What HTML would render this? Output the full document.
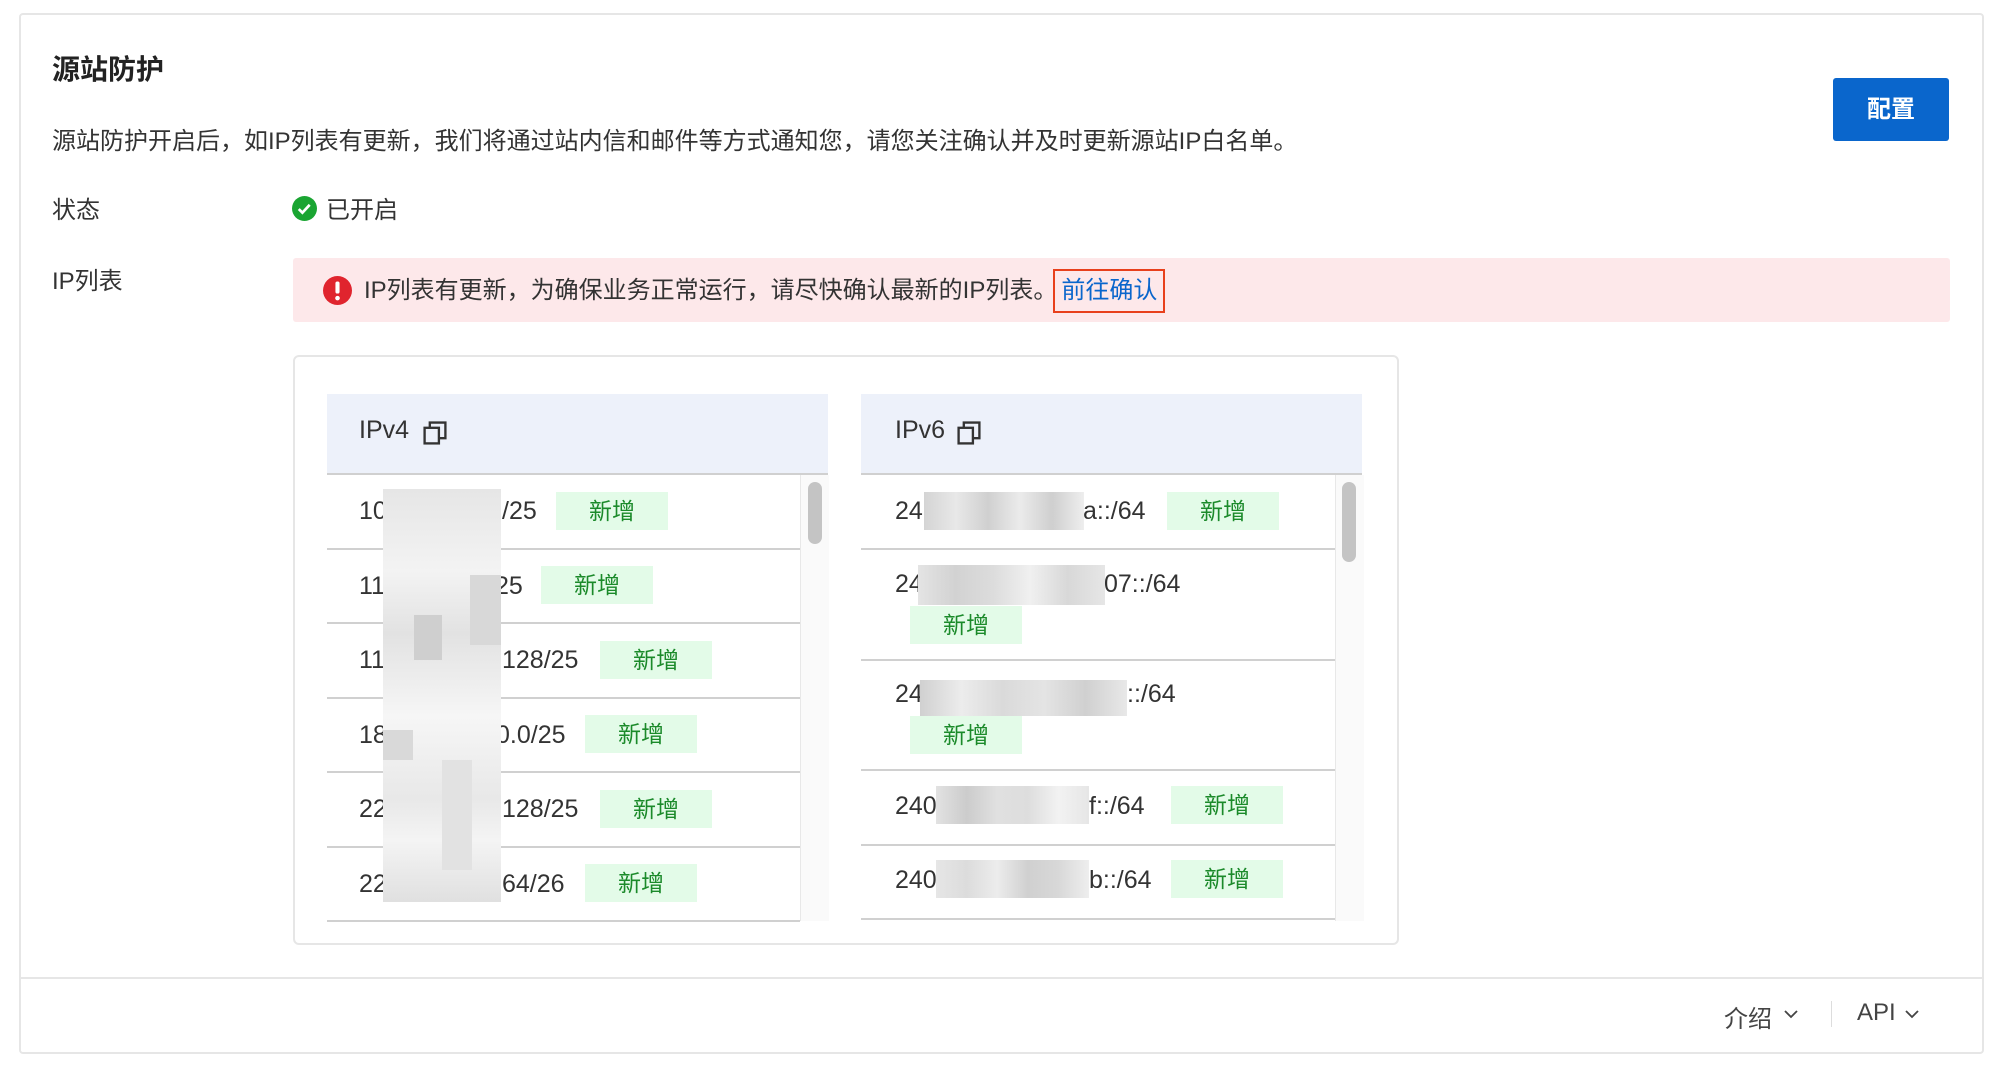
<!DOCTYPE html><html><head><meta charset="utf-8"><style>
body{margin:0;width:1994px;height:1074px;background:#fff;font-family:"Liberation Sans","Noto Sans CJK SC",sans-serif;color:#333;position:relative;overflow:hidden}
.a{position:absolute;white-space:nowrap}
.tag{position:absolute;background:#e3fbe8;color:#1b8a2a;font-size:23px;width:112px;height:38px;line-height:38px;text-align:center}
.ip{position:absolute;font-size:25px;color:#333;line-height:30px}
.ln{position:absolute;height:2px;background:#d0d0d0}
.b{position:absolute}
</style></head><body>
<div class="a" style="left:19px;top:13px;width:1961px;height:1037px;border:2px solid #e6e6e6;border-radius:4px"></div>
<div class="a" style="left:52px;top:48px;font-size:28px;font-weight:bold;color:#222">源站防护</div>
<div class="a" style="left:1833px;top:78px;width:116px;height:63px;background:#0a66cc;border-radius:3px;color:#fff;font-size:24px;font-weight:bold;line-height:63px;text-align:center">配置</div>
<div class="a" style="left:52px;top:121px;font-size:24px;color:#333">源站防护开启后，如IP列表有更新，我们将通过站内信和邮件等方式通知您，请您关注确认并及时更新源站IP白名单。</div>
<div class="a" style="left:52px;top:190px;font-size:24px">状态</div>
<svg class="a" style="left:292px;top:196px" width="25" height="25" viewBox="0 0 24 24"><circle cx="12" cy="12" r="12" fill="#1aa532"/><path d="M6.5 12.5l3.5 3.5 7-7.5" stroke="#fff" stroke-width="2.6" fill="none"/></svg>
<div class="a" style="left:326px;top:190px;font-size:24px">已开启</div>
<div class="a" style="left:52px;top:261px;font-size:24px">IP列表</div>
<div class="a" style="left:293px;top:258px;width:1657px;height:64px;background:#fde8ea;border-radius:3px"></div>
<svg class="a" style="left:323px;top:276px" width="29" height="29" viewBox="0 0 24 24"><circle cx="12" cy="12" r="12" fill="#e0242e"/><rect x="10.3" y="4.5" width="3.4" height="10" rx="1.5" fill="#fff"/><circle cx="12" cy="18.3" r="1.9" fill="#fff"/></svg>
<div class="a" style="left:364px;top:269px;font-size:24px;color:#333;line-height:44px">IP列表有更新，为确保业务正常运行，请尽快确认最新的IP列表<span style="letter-spacing:-10px">。</span><span style="display:inline-block;margin-left:6px;border:2px solid #e8401c;color:#0a66cc;padding:0 6px;line-height:40px">前往确认</span></div>
<div class="a" style="left:293px;top:355px;width:1102px;height:586px;border:2px solid #e6e6e6;border-radius:6px"></div>
<div class="b" style="left:327px;top:394px;width:501px;height:79px;background:#edf1fa"></div>
<div class="b" style="left:861px;top:394px;width:501px;height:79px;background:#edf1fa"></div>
<div class="ln" style="left:327px;top:473px;width:501px"></div>
<div class="ln" style="left:861px;top:473px;width:501px"></div>
<div class="a" style="left:359px;top:416px;font-size:25px;color:#333">IPv4</div>
<div class="a" style="left:895px;top:416px;font-size:25px;color:#333">IPv6</div>
<svg class="a" style="left:422px;top:420px" width="26" height="26" viewBox="0 0 20 20"><rect x="2" y="6" width="11" height="12" fill="none" stroke="#333" stroke-width="1.8"/><path d="M6 6V2h12v12h-5" fill="none" stroke="#333" stroke-width="1.8"/></svg>
<svg class="a" style="left:956px;top:420px" width="26" height="26" viewBox="0 0 20 20"><rect x="2" y="6" width="11" height="12" fill="none" stroke="#333" stroke-width="1.8"/><path d="M6 6V2h12v12h-5" fill="none" stroke="#333" stroke-width="1.8"/></svg>
<div class="b" style="left:800px;top:475px;width:28px;height:446px;background:#fafafa;border-left:1px solid #e8e8e8"></div>
<div class="b" style="left:808px;top:482px;width:14px;height:62px;background:#c4c4c4;border-radius:7px"></div>
<div class="b" style="left:1335px;top:475px;width:28px;height:446px;background:#fafafa;border-left:1px solid #e8e8e8"></div>
<div class="b" style="left:1342px;top:482px;width:14px;height:80px;background:#c4c4c4;border-radius:7px"></div>
<div class="ln" style="left:327px;top:548px;width:473px"></div>
<div class="ln" style="left:327px;top:622px;width:473px"></div>
<div class="ln" style="left:327px;top:697px;width:473px"></div>
<div class="ln" style="left:327px;top:771px;width:473px"></div>
<div class="ln" style="left:327px;top:846px;width:473px"></div>
<div class="ln" style="left:327px;top:920px;width:473px"></div>
<div class="ln" style="left:861px;top:548px;width:474px"></div>
<div class="ln" style="left:861px;top:659px;width:474px"></div>
<div class="ln" style="left:861px;top:769px;width:474px"></div>
<div class="ln" style="left:861px;top:844px;width:474px"></div>
<div class="ln" style="left:861px;top:918px;width:474px"></div>
<div class="ip" style="left:359px;top:496px">10</div><div class="ip" style="left:502px;top:496px">/25</div><div class="tag" style="left:556px;top:492px">新增</div>
<div class="ip" style="left:359px;top:571px">11</div><div class="ip" style="left:495px;top:571px">25</div><div class="tag" style="left:541px;top:566px">新增</div>
<div class="ip" style="left:359px;top:645px">11</div><div class="ip" style="left:502px;top:645px">128/25</div><div class="tag" style="left:600px;top:641px">新增</div>
<div class="ip" style="left:359px;top:720px">18</div><div class="ip" style="left:496px;top:720px">0.0/25</div><div class="tag" style="left:585px;top:715px">新增</div>
<div class="ip" style="left:359px;top:794px">22</div><div class="ip" style="left:502px;top:794px">128/25</div><div class="tag" style="left:600px;top:790px">新增</div>
<div class="ip" style="left:359px;top:869px">22</div><div class="ip" style="left:502px;top:869px">64/26</div><div class="tag" style="left:585px;top:864px">新增</div>
<div class="b" style="left:383px;top:489px;width:118px;height:413px;background:linear-gradient(180deg,#e6e6e6 0,#f3f3f3 20%,#e2e2e2 35%,#f6f6f6 55%,#e8e8e8 75%,#f4f4f4 85%,#e0e0e0 100%)"></div>
<div class="b" style="left:414px;top:615px;width:28px;height:45px;background:#cfcfcf"></div>
<div class="b" style="left:470px;top:575px;width:31px;height:70px;background:#d8d8d8"></div>
<div class="b" style="left:383px;top:730px;width:30px;height:30px;background:#d9d9d9"></div>
<div class="b" style="left:442px;top:760px;width:30px;height:110px;background:#e2e2e2"></div>
<div class="ip" style="left:895px;top:496px">24</div><div class="ip" style="left:1083px;top:496px">a::/64</div><div class="tag" style="left:1167px;top:492px">新增</div>
<div class="b" style="left:924px;top:492px;width:160px;height:38px;background:linear-gradient(90deg,#d4d4d4,#e8e8e8,#d0d0d0,#ebebeb,#cfcfcf,#eeeeee)"></div>
<div class="ip" style="left:895px;top:569px">24</div><div class="ip" style="left:1104px;top:569px">07::/64</div><div class="tag" style="left:910px;top:606px">新增</div>
<div class="b" style="left:918px;top:565px;width:187px;height:40px;background:linear-gradient(90deg,#e4e4e4,#d2d2d2,#dcdcdc,#f0f0f0,#d8d8d8,#e6e6e6)"></div>
<div class="ip" style="left:895px;top:679px">24</div><div class="ip" style="left:1127px;top:679px">::/64</div><div class="tag" style="left:910px;top:716px">新增</div>
<div class="b" style="left:920px;top:680px;width:207px;height:36px;background:linear-gradient(90deg,#d0d0d0,#ececec,#dadada,#e4e4e4,#d0d0d0,#e8e8e8)"></div>
<div class="ip" style="left:895px;top:791px">240</div><div class="ip" style="left:1089px;top:791px">f::/64</div><div class="tag" style="left:1171px;top:786px">新增</div>
<div class="b" style="left:936px;top:786px;width:153px;height:38px;background:linear-gradient(90deg,#e2e2e2,#cccccc,#e0e0e0,#dddddd,#f2f2f2,#e6e6e6)"></div>
<div class="ip" style="left:895px;top:865px">240</div><div class="ip" style="left:1089px;top:865px">b::/64</div><div class="tag" style="left:1171px;top:860px">新增</div>
<div class="b" style="left:936px;top:860px;width:153px;height:38px;background:linear-gradient(90deg,#e6e6e6,#dcdcdc,#ececec,#d0d0d0,#d8d8d8,#eeeeee)"></div>
<div class="b" style="left:21px;top:977px;width:1961px;height:2px;background:#e6e6e6"></div>
<div class="a" style="left:1724px;top:999px;font-size:24px;color:#444">介绍</div>
<svg class="a" style="left:1783px;top:1008px" width="16" height="12" viewBox="0 0 16 12"><path d="M2 3l6 6 6-6" stroke="#444" stroke-width="1.8" fill="none"/></svg>
<div class="b" style="left:1831px;top:1001px;width:1px;height:26px;background:#ddd"></div>
<div class="a" style="left:1857px;top:999px;font-size:24px;color:#444">API</div>
<svg class="a" style="left:1904px;top:1008px" width="16" height="12" viewBox="0 0 16 12"><path d="M2 3l6 6 6-6" stroke="#444" stroke-width="1.8" fill="none"/></svg>
</body></html>
